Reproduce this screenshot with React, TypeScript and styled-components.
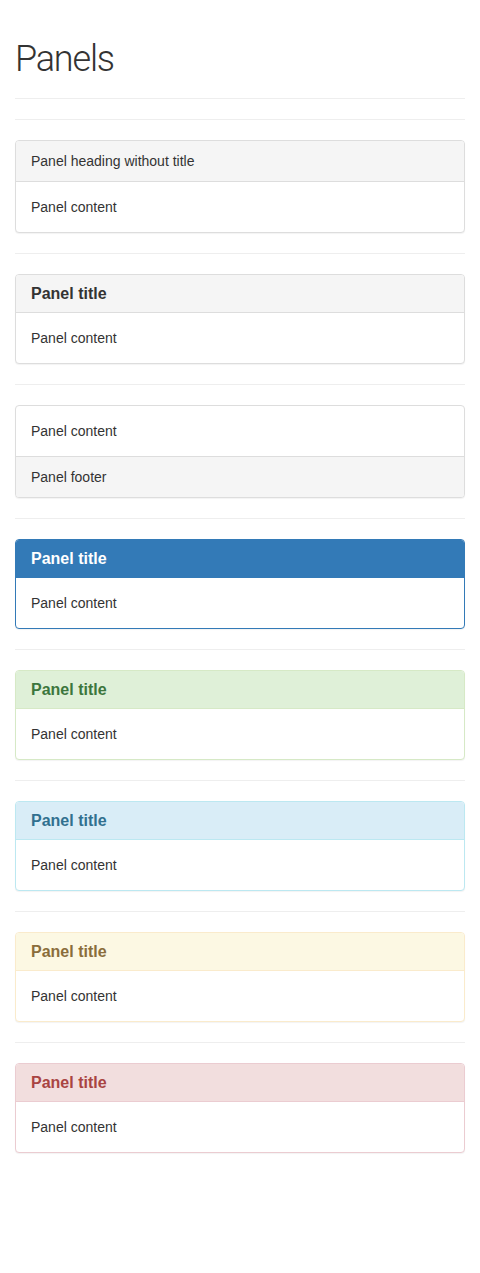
import * as React from "react";
import styled, { createGlobalStyle, css } from "styled-components";

type Variant = "default" | "primary" | "success" | "info" | "warning" | "danger";

const palette: Record<Variant, { border: string; bg: string; color: string }> = {
  default: { border: "#ddd", bg: "#f5f5f5", color: "#333" },
  primary: { border: "#337ab7", bg: "#337ab7", color: "#fff" },
  success: { border: "#d6e9c6", bg: "#dff0d8", color: "#3c763d" },
  info: { border: "#bce8f1", bg: "#d9edf7", color: "#31708f" },
  warning: { border: "#faebcc", bg: "#fcf8e3", color: "#8a6d3b" },
  danger: { border: "#ebccd1", bg: "#f2dede", color: "#a94442" },
};

const GlobalStyle = createGlobalStyle`
  * { box-sizing: border-box; }
  html, body {
    margin: 0;
    padding: 0;
    background: #fff;
  }
  body {
    font-family: "Liberation Sans", Arial, sans-serif;
    font-size: 14px;
    line-height: 20px;
    color: #333;
  }
`;

const Container = styled.div`
  padding: 0 15px;
  display: flow-root;
`;

const PageHeader = styled.div`
  margin: 40px 0 20px;
  padding-bottom: 9px;
  border-bottom: 1px solid #eee;
`;

const Title = styled.h1`
  margin: 0 0 10px;
  font-family: Roboto, "Liberation Sans", sans-serif;
  font-weight: 300;
  font-size: 36px;
  line-height: 39px;
  letter-spacing: -1.2px;
  color: #333;
`;

const Rule = styled.hr`
  margin: 20px 0;
  border: 0;
  border-top: 1px solid #eee;
  height: 0;
`;

const Panel = styled.div<{ $variant: Variant }>`
  margin-bottom: 20px;
  background: #fff;
  border: 1px solid ${(p) => palette[p.$variant].border};
  border-radius: 4px;
  box-shadow: 0 1px 1px rgba(0, 0, 0, 0.05);
`;

const PanelHeading = styled.div<{ $variant: Variant }>`
  padding: 10px 15px;
  border-bottom: 1px solid ${(p) => palette[p.$variant].border};
  border-radius: 3px 3px 0 0;
  ${(p) => css`
    background: ${palette[p.$variant].bg};
    color: ${palette[p.$variant].color};
  `}
`;

const PanelTitle = styled.h3`
  margin: 0;
  font-size: 16px;
  font-weight: 700;
  line-height: 17px;
  color: inherit;
`;

const PanelBody = styled.div`
  padding: 15px;
`;

const PanelFooter = styled.div`
  padding: 10px 15px;
  background: #f5f5f5;
  border-top: 1px solid #ddd;
  border-radius: 0 0 3px 3px;
`;

const contextual: Variant[] = ["primary", "success", "info", "warning", "danger"];

export default function App() {
  return (
    <>
      <GlobalStyle />
      <Container>
        <PageHeader>
          <Title>Panels</Title>
        </PageHeader>

        <Rule />
        <Panel $variant="default">
          <PanelHeading $variant="default">Panel heading without title</PanelHeading>
          <PanelBody>Panel content</PanelBody>
        </Panel>

        <Rule />
        <Panel $variant="default">
          <PanelHeading $variant="default">
            <PanelTitle>Panel title</PanelTitle>
          </PanelHeading>
          <PanelBody>Panel content</PanelBody>
        </Panel>

        <Rule />
        <Panel $variant="default">
          <PanelBody>Panel content</PanelBody>
          <PanelFooter>Panel footer</PanelFooter>
        </Panel>

        {contextual.map((v) => (
          <React.Fragment key={v}>
            <Rule />
            <Panel $variant={v}>
              <PanelHeading $variant={v}>
                <PanelTitle>Panel title</PanelTitle>
              </PanelHeading>
              <PanelBody>Panel content</PanelBody>
            </Panel>
          </React.Fragment>
        ))}
      </Container>
    </>
  );
}
